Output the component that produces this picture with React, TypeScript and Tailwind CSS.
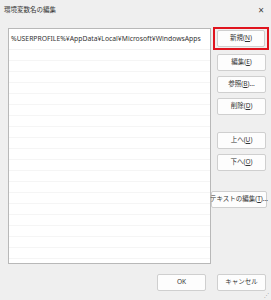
import React from "react";

const font = { fontFamily: '"Noto Sans", "Noto Sans CJK JP", sans-serif' };

function Btn({ children, className = "" }: { children: React.ReactNode; className?: string }) {
  return (
    <div
      className={`h-[17px] flex items-center justify-center bg-[#fdfdfd] border border-[#cfcfcf] rounded-[2px] text-[6.5px] text-[#333] leading-none whitespace-nowrap ${className}`}
    >
      {children}
    </div>
  );
}

export default function App() {
  const rows = Array.from({ length: 21 });
  return (
    <div className="w-[271px] h-[300px] bg-[#efefef] relative overflow-hidden" style={font}>
      <div className="h-[20px] flex items-center justify-between pl-[4px] pr-[7px]">
        <span className="text-[6.5px] text-[#333] leading-none">環境変数名の編集</span>
        <span className="text-[10px] text-[#444] leading-none">×</span>
      </div>
      <div className="flex mt-[8px]">
        <div className="ml-[8px] w-[203px] h-[236px] bg-white border border-[#b8b8b8] flex flex-col overflow-hidden">
          <div className="h-[21px] shrink-0 flex items-center pl-[2px] text-[6.8px] text-[#333] leading-none border-b border-[#f3f3f3]">
            %USERPROFILE%¥AppData¥Local¥Microsoft¥WindowsApps
          </div>
          {rows.map((_, i) => (
            <div key={i} className="h-[11px] shrink-0 border-b border-[#f5f5f5]" />
          ))}
        </div>
        <div className="flex flex-col ml-[2px] w-[57px]">
          <div className="border-2 border-[#e0141e] p-[1px] w-[56px] -mt-[1px]">
            <Btn className="w-[48px] ml-[1px]">
              新規(<span className="underline">N</span>)
            </Btn>
          </div>
          <Btn className="w-[49px] ml-[4px] mt-[4px]">
            編集(<span className="underline">E</span>)
          </Btn>
          <Btn className="w-[49px] ml-[4px] mt-[5px]">
            参照(<span className="underline">B</span>)...
          </Btn>
          <Btn className="w-[49px] ml-[4px] mt-[5px]">
            削除(<span className="underline">D</span>)
          </Btn>
          <Btn className="w-[49px] ml-[4px] mt-[17px]">
            上へ(<span className="underline">U</span>)
          </Btn>
          <Btn className="w-[49px] ml-[4px] mt-[5px]">
            下へ(<span className="underline">O</span>)
          </Btn>
          <Btn className="w-[56px] -ml-[2px] mt-[20px]">
            テキストの編集(<span className="underline">T</span>)...
          </Btn>
        </div>
      </div>
      <div className="flex justify-end gap-[11px] pr-[5px] mt-[10px]">
        <Btn className="w-[49px]">OK</Btn>
        <Btn className="w-[49px]">キャンセル</Btn>
      </div>
      <div className="absolute right-[2px] bottom-[2px] text-[5px] text-[#999] leading-none">⋰</div>
    </div>
  );
}
